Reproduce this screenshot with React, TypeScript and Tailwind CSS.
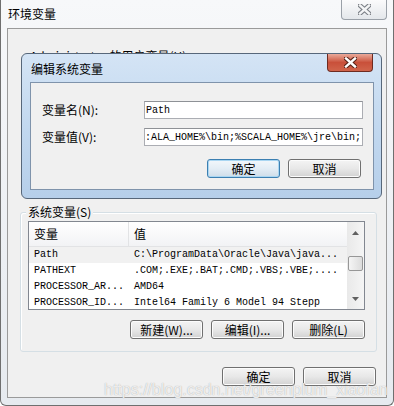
import type { ReactNode } from "react";

const cjk = { fontFamily: '"Noto Sans CJK SC", "Noto Sans", sans-serif' };
const mono = { fontFamily: '"Liberation Mono", "Noto Sans CJK SC", monospace' };

function WinButton({
  children,
  focused = false,
}: {
  children: ReactNode;
  focused?: boolean;
}) {
  return (
    <div
      className={`flex h-[19px] w-[73px] items-center justify-center rounded-[3px] border text-[12px] leading-none text-black ${
        focused
          ? "border-[#3c7fb1] bg-gradient-to-b from-[#f2f7fb] via-[#e3edf5] to-[#cfdde9] shadow-[inset_0_0_0_1px_#a9d6f2]"
          : "border-[#707070] bg-gradient-to-b from-[#f4f4f4] via-[#e8e8e8] to-[#d2d2d2] shadow-[inset_0_0_0_1px_#fcfcfc]"
      }`}
      style={cjk}
    >
      {children}
    </div>
  );
}

function CloseGlyph({ dark, light }: { dark: string; light: string }) {
  return (
    <svg width="13" height="11" viewBox="0 0 13 11">
      <path d="M2 1.5 L11 9.5 M11 1.5 L2 9.5" stroke={dark} strokeWidth="4.6" strokeLinecap="square" />
      <path d="M2 1.5 L11 9.5 M11 1.5 L2 9.5" stroke={light} strokeWidth="2.4" strokeLinecap="square" />
    </svg>
  );
}

const rows = [
  ["Path", "C:\\ProgramData\\Oracle\\Java\\java..."],
  ["PATHEXT", ".COM;.EXE;.BAT;.CMD;.VBS;.VBE;...."],
  ["PROCESSOR_AR...", "AMD64"],
  ["PROCESSOR_ID...", "Intel64 Family 6 Model 94 Stepp"],
];

export default function App() {
  return (
    <div className="relative h-[406px] w-[394px] overflow-hidden bg-white">
      {/* outer window */}
      <div className="flex h-[406px] w-[394px] flex-col rounded-b-[6px] border-x border-b border-[#6f6f6f] bg-gradient-to-b from-[#f7f8fa] to-[#e6eaef]">
        <div className="flex h-[28px] items-start justify-between">
          <span className="ml-[7px] mt-[7px] text-[12px] leading-[14px] text-black" style={cjk}>
            环境变量
          </span>
          <div className="mr-[6px] flex h-[20px] w-[46px] items-center justify-center rounded-b-[4px] border-x border-b border-[#9aa0a8] bg-gradient-to-b from-[#fbfbfc] to-[#e4e7eb]">
            <CloseGlyph dark="#7b7f86" light="#f4f5f6" />
          </div>
        </div>

        <div className="ml-[6px] flex h-[370px] w-[380px] flex-col border border-[#9a9a9a] bg-[#f0f0f0]">
          <div className="ml-[22px] mt-[19px] h-[16px] text-[12px] leading-[16px] text-black" style={cjk}>
            Administrator 的用户变量(U)
          </div>

          {/* system variables group */}
          <div className="relative ml-[12px] mt-[148px] h-[140px] w-[357px] rounded-[3px] border border-[#d5dfe5] shadow-[inset_1px_1px_0_#fff]">
            <span
              className="absolute -top-[8px] left-[5px] bg-[#f0f0f0] px-[2px] text-[12px] leading-[14px] text-black"
              style={cjk}
            >
              系统变量(S)
            </span>
            <div className="ml-[7px] mt-[8px] flex h-[89px] w-[337px] border border-[#828790] bg-white">
              <div className="flex min-w-0 flex-1 flex-col overflow-hidden">
                <div className="flex h-[25px] shrink-0 items-center border-b border-[#e2e3e5] bg-gradient-to-b from-white to-[#f2f3f5] text-[12px] text-black" style={cjk}>
                  <div className="flex h-full w-[100px] items-center border-r border-[#e2e3e5] pl-[5px]">变量</div>
                  <div className="pl-[5px]">值</div>
                </div>
                {rows.map(([k, v], i) => (
                  <div
                    key={k}
                    className={`flex h-[16px] shrink-0 items-center text-[10px] leading-[16px] text-black ${
                      i === 0 ? "bg-[#f1f1f1]" : ""
                    }`}
                    style={mono}
                  >
                    <div className="w-[100px] pl-[5px] whitespace-pre">{k}</div>
                    <div className="pl-[5px] whitespace-pre">{v}</div>
                  </div>
                ))}
              </div>
              {/* scrollbar */}
              <div className="flex w-[17px] flex-col items-center bg-gradient-to-r from-[#e9e9e9] to-[#f5f5f5]">
                <div className="flex h-[17px] w-full items-center justify-center pt-[4px]">
                  <svg width="7" height="4" viewBox="0 0 7 4"><path d="M3.5 0 L7 4 L0 4 Z" fill="#606060" /></svg>
                </div>
                <div className="mt-[17px] h-[15px] w-[15px] rounded-[2px] border border-[#979797] bg-gradient-to-r from-[#f5f5f5] to-[#dcdcdc]" />
                <div className="mt-auto flex h-[17px] w-full items-center justify-center pb-[4px]">
                  <svg width="7" height="4" viewBox="0 0 7 4"><path d="M0 0 L7 0 L3.5 4 Z" fill="#606060" /></svg>
                </div>
              </div>
            </div>
            <div className="mr-[11px] mt-[10px] flex justify-end gap-[8px]">
              <WinButton>新建(W)...</WinButton>
              <WinButton>编辑(I)...</WinButton>
              <WinButton>删除(L)</WinButton>
            </div>
          </div>

          <div className="mr-[10px] mt-[15px] flex justify-end gap-[8px]">
            <WinButton>确定</WinButton>
            <WinButton>取消</WinButton>
          </div>
        </div>
      </div>

      {/* edit dialog on top */}
      <div className="absolute left-[21px] top-[53px] flex h-[146px] w-[361px] flex-col rounded-[6px] border border-[#57677a] bg-gradient-to-b from-[#d4e4f5] via-[#c2d8ef] to-[#b6cfea]">
        <div className="flex h-[28px] items-start justify-between">
          <span className="ml-[9px] mt-[8px] text-[12px] leading-[14px] text-black" style={cjk}>
            编辑系统变量
          </span>
          <div className="mr-[8px] flex h-[18px] w-[46px] items-center justify-center rounded-b-[4px] border-x border-b border-[#6e2b20] bg-gradient-to-b from-[#e9a99a] via-[#c9503a] to-[#d0644b]">
            <CloseGlyph dark="#5a2318" light="#ffffff" />
          </div>
        </div>
        <div className="ml-[8px] flex h-[108px] w-[344px] flex-col border border-[#7f93ab] bg-[#f0f0f0] pl-[11px] pr-[10px] pt-[18px] text-[12px] text-black" style={cjk}>
          <div className="flex h-[18px] items-center">
            <span className="w-[102px]">变量名(N):</span>
            <div className="flex h-[18px] flex-1 items-center border border-[#abadb3] border-t-[#8e9196] bg-white pl-[1px] text-[10px]" style={mono}>
              Path
            </div>
          </div>
          <div className="mt-[9px] flex h-[18px] items-center">
            <span className="w-[102px]">变量值(V):</span>
            <div className="flex h-[18px] flex-1 items-center overflow-hidden whitespace-pre border border-[#abadb3] border-t-[#8e9196] bg-white text-[10px]" style={mono}>
              :ALA_HOME%\bin;%SCALA_HOME%\jre\bin;
            </div>
          </div>
          <div className="mr-[2px] mt-[13px] flex justify-end gap-[8px]">
            <WinButton focused>确定</WinButton>
            <WinButton>取消</WinButton>
          </div>
        </div>
      </div>

      {/* watermark */}
      <div
        className="pointer-events-none absolute left-[104px] top-[381px] text-[16px] leading-[18px] text-white/80 [text-shadow:0_0_1px_#9a9a9a]"
        style={{ fontFamily: '"Liberation Sans", Arial, sans-serif' }}
      >
        https://blog.csdn.net/greenplum_xiaofan
      </div>
    </div>
  );
}
